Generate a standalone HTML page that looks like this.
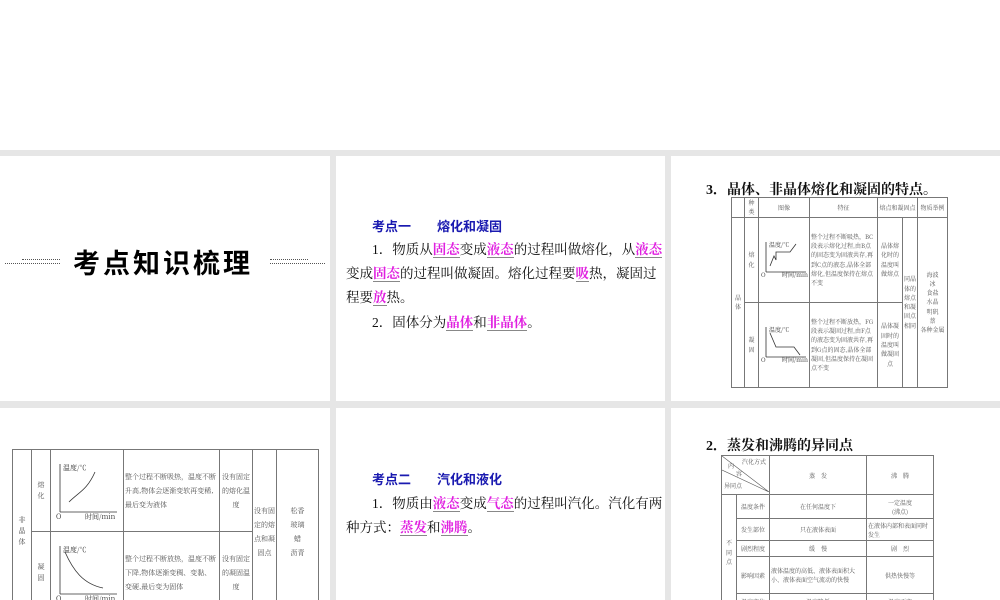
<!DOCTYPE html>
<html><head><meta charset="utf-8">
<style>
*{margin:0;padding:0;box-sizing:border-box}
body{width:1000px;height:600px;background:#fff;position:relative;overflow:hidden;font-family:"Liberation Serif","Noto Serif CJK SC",serif}
.gray{position:absolute;left:0;top:150px;width:1000px;height:450px;background:#e6e6e6}
.p{position:absolute;background:#fff;overflow:hidden}
.a{position:absolute;white-space:nowrap}
.h{color:#1a1ab0;font-weight:bold;font-size:13px;font-family:"Liberation Sans","Noto Sans CJK SC",sans-serif}
.t{font-size:13.5px;color:#111}
.m{color:#e020e0;font-weight:bold;border-bottom:1px solid #888}
table{border-collapse:collapse;position:absolute;table-layout:fixed;font-size:6px;color:#555;font-family:"Noto Serif CJK SC",serif;text-align:center}
td{border:1px solid #777;line-height:1.55;overflow:hidden;padding:0 1px}
.tt{font-weight:bold;font-size:14px;color:#111}
</style></head><body>
<div class="gray"></div>

<div class="p" style="left:0;top:156px;width:330px;height:245px">
 <div class="a" style="left:5px;top:107px;width:55px;border-top:1px dotted #555"></div>
 <div class="a" style="left:22px;top:103px;width:38px;border-top:1px dotted #555"></div>
 <div class="a" style="left:270px;top:107px;width:55px;border-top:1px dotted #555"></div>
 <div class="a" style="left:270px;top:103px;width:38px;border-top:1px dotted #555"></div>
 <div class="a" style="left:73px;top:86px;font-size:27px;font-weight:bold;letter-spacing:3px;font-family:'Noto Sans CJK SC',sans-serif;color:#000">考点知识梳理</div>
</div>

<div class="p" style="left:336px;top:156px;width:329px;height:245px">
 <div class="a h" style="left:36px;top:60px">考点一　　熔化和凝固</div>
 <div class="a t" style="left:36px;top:82px">1．物质从<span class="m">固态</span>变成<span class="m">液态</span>的过程叫做熔化，从<span class="m">液态</span></div>
 <div class="a t" style="left:10px;top:106px">变成<span class="m">固态</span>的过程叫做凝固。熔化过程要<span class="m">吸</span>热，凝固过</div>
 <div class="a t" style="left:10px;top:130px">程要<span class="m">放</span>热。</div>
 <div class="a t" style="left:36px;top:155px">2．固体分为<span class="m">晶体</span>和<span class="m">非晶体</span>。</div>
</div>

<div class="p" style="left:671px;top:156px;width:329px;height:245px">
 <div class="a tt" style="left:35px;top:23px">3．晶体、非晶体熔化和凝固的特点。</div>
 <table style="left:60px;top:41px;width:216px">
  <colgroup><col style="width:13px"><col style="width:14px"><col style="width:51px"><col style="width:68px"><col style="width:25px"><col style="width:15px"><col style="width:30px"></colgroup>
  <tr style="height:11px"><td></td><td>种类</td><td>图像</td><td>特征</td><td colspan="2">熔点和凝固点</td><td>物质举例</td></tr>
  <tr style="height:85px"><td rowspan="2">晶<br>体</td><td>熔<br>化</td><td><svg width="48" height="40"><text x="9" y="9" font-size="6" fill="#333">温度/℃</text><text x="1" y="39" font-size="6" fill="#333">O</text><text x="22" y="39" font-size="6" fill="#333">时间/min</text><path d="M6 34V4M6 34H46M10 28L14 18L16 22V14L30 14L36 6" stroke="#333" fill="none" stroke-width=".8"/></svg></td><td style="text-align:left">整个过程不断吸热，BC段表示熔化过程,由B点的固态变为固液共存,再到C点的液态,晶体全部熔化,但温度保持在熔点不变</td><td>晶体熔化时的温度叫做熔点</td><td rowspan="2">同晶体的熔点和凝固点相同</td><td rowspan="2">海波<br>冰<br>食盐<br>水晶<br>明矾<br>萘<br>各种金属</td></tr>
  <tr style="height:85px"><td>凝<br>固</td><td><svg width="48" height="40"><text x="9" y="9" font-size="6" fill="#333">温度/℃</text><text x="1" y="39" font-size="6" fill="#333">O</text><text x="22" y="39" font-size="6" fill="#333">时间/min</text><path d="M6 34V4M6 34H46M10 10L16 24H34L40 32" stroke="#333" fill="none" stroke-width=".8"/></svg></td><td style="text-align:left">整个过程不断放热，FG段表示凝固过程,由F点的液态变为固液共存,再到G点的固态,晶体全部凝固,但温度保持在凝固点不变</td><td>晶体凝固时的温度叫做凝固点</td></tr>
 </table>
</div>

<div class="p" style="left:0;top:408px;width:330px;height:192px">
 <table style="left:12px;top:41px;width:306px;font-size:7px">
  <colgroup><col style="width:19px"><col style="width:19px"><col style="width:73px"><col style="width:96px"><col style="width:33px"><col style="width:24px"><col style="width:42px"></colgroup>
  <tr style="height:82px"><td rowspan="2">非<br>晶<br>体</td><td>熔<br>化</td><td><svg width="68" height="66"><text x="10" y="14" font-size="7" fill="#333">温度/℃</text><text x="3" y="63" font-size="7" fill="#333">O</text><text x="32" y="63" font-size="7" fill="#333">时间/min</text><path d="M7 56V8M7 56H64M16 46C26 36 34 34 42 16" stroke="#333" fill="none" stroke-width=".8"/></svg></td><td style="text-align:left;line-height:2">整个过程不断吸热，温度不断升高,物体会逐渐变软再变稀,最后变为液体</td><td style="line-height:2">没有固定的熔化温度</td><td rowspan="2" style="line-height:2">没有固定的熔点和凝固点</td><td rowspan="2" style="line-height:2">松香<br>玻璃<br>蜡<br>沥青</td></tr>
  <tr style="height:82px"><td>凝<br>固</td><td><svg width="68" height="66"><text x="10" y="14" font-size="7" fill="#333">温度/℃</text><text x="3" y="63" font-size="7" fill="#333">O</text><text x="32" y="63" font-size="7" fill="#333">时间/min</text><path d="M7 56V8M7 56H64M12 14C20 32 30 46 50 50" stroke="#333" fill="none" stroke-width=".8"/></svg></td><td style="text-align:left;line-height:2">整个过程不断放热，温度不断下降,物体逐渐变稠、变黏、变硬,最后变为固体</td><td style="line-height:2">没有固定的凝固温度</td></tr>
 </table>
</div>

<div class="p" style="left:336px;top:408px;width:329px;height:192px">
 <div class="a h" style="left:36px;top:61px">考点二　　汽化和液化</div>
 <div class="a t" style="left:36px;top:84px">1．物质由<span class="m">液态</span>变成<span class="m">气态</span>的过程叫汽化。汽化有两</div>
 <div class="a t" style="left:10px;top:108px">种方式：<span class="m">蒸发</span>和<span class="m">沸腾</span>。</div>
</div>

<div class="p" style="left:671px;top:408px;width:329px;height:192px">
 <div class="a tt" style="left:35px;top:27px">2．蒸发和沸腾的异同点</div>
 <table style="left:50px;top:47px;width:212px">
  <colgroup><col style="width:15px"><col style="width:33px"><col style="width:97px"><col style="width:67px"></colgroup>
  <tr style="height:37px"><td colspan="2" style="padding:0"><svg width="47" height="36"><path d="M0 0L47 36M0 14L47 36" stroke="#555" stroke-width=".6"/><text x="6" y="12" font-size="6" fill="#555">内</text><text x="20" y="8" font-size="6" fill="#555">汽化方式</text><text x="14" y="20" font-size="6" fill="#555">容</text><text x="2" y="32" font-size="6" fill="#555">异同点</text></svg></td><td>蒸　发</td><td>沸　腾</td></tr>
  <tr style="height:24px"><td rowspan="5">不<br>同<br>点</td><td>温度条件</td><td>在任何温度下</td><td>一定温度<br>(沸点)</td></tr>
  <tr style="height:22px"><td>发生部位</td><td>只在液体表面</td><td style="text-align:left">在液体内部和表面同时发生</td></tr>
  <tr style="height:16px"><td>剧烈程度</td><td>缓　慢</td><td>剧　烈</td></tr>
  <tr style="height:37px"><td>影响因素</td><td style="text-align:left">液体温度的高低、液体表面积大小、液体表面空气流动的快慢</td><td>供热快慢等</td></tr>
  <tr style="height:16px"><td>温度变化</td><td>温度降低</td><td>温度不变</td></tr>
 </table>
</div>
</body></html>
